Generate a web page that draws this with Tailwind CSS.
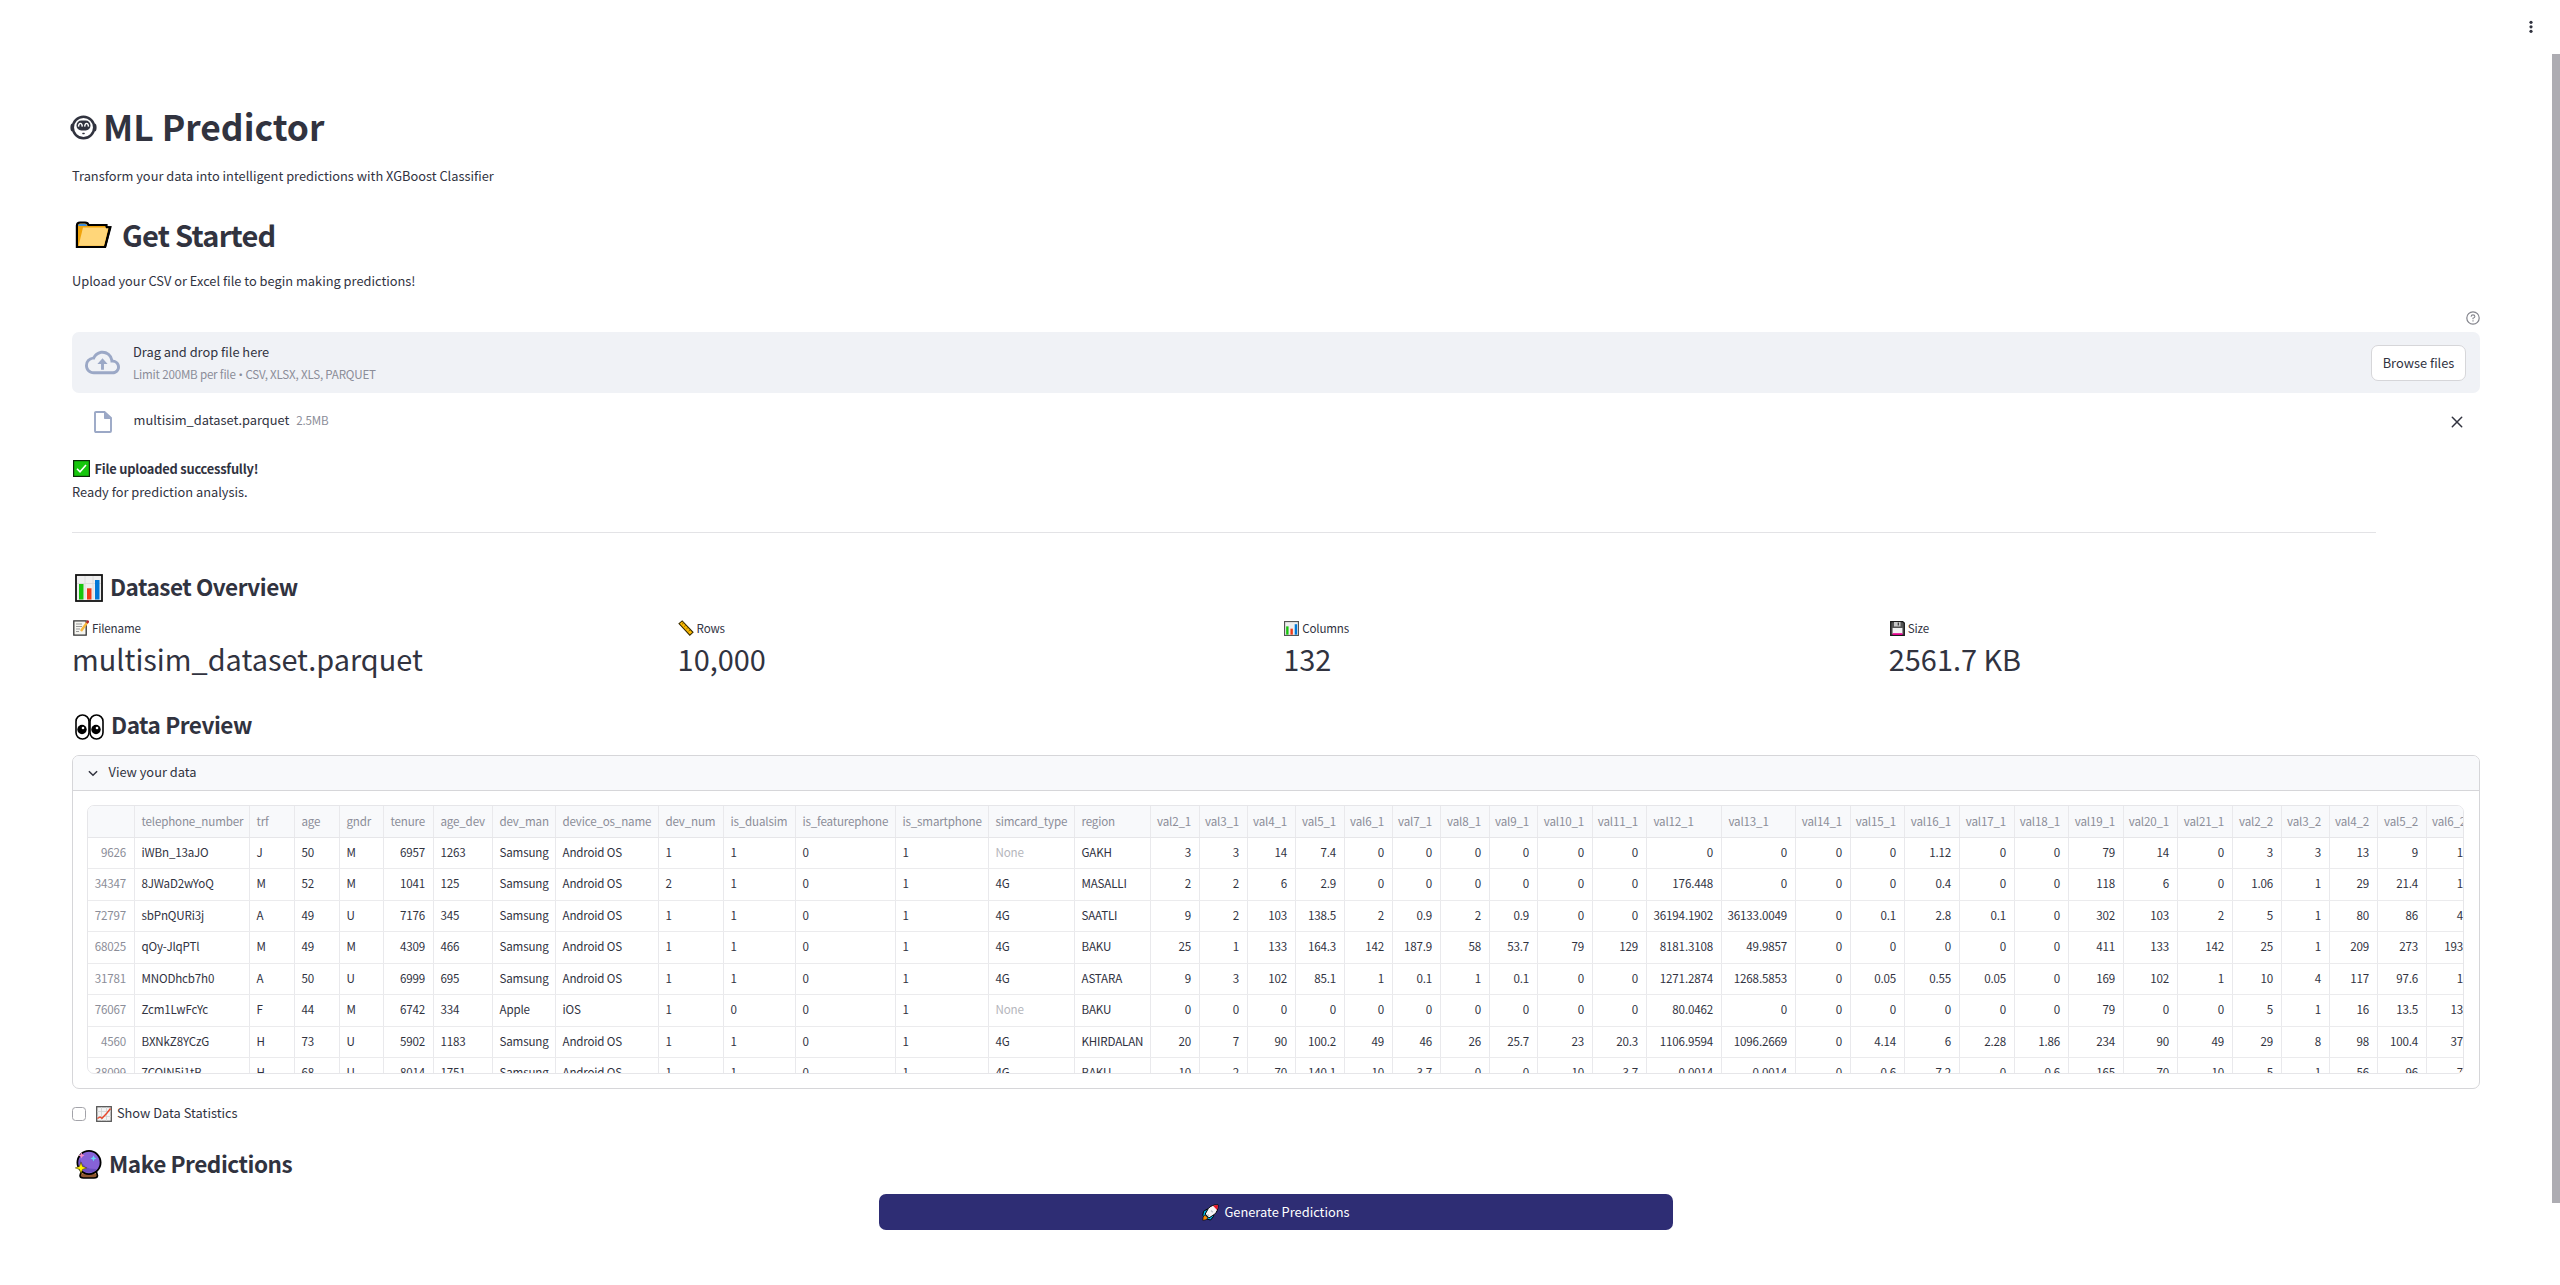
<!DOCTYPE html>
<html lang="en">
<head>
<meta charset="utf-8">
<title>ML Predictor</title>
<script src="https://cdn.jsdelivr.net/npm/@tailwindcss/browser@4"></script>
</head>
<body class="bg-white text-[#31333f] font-['Noto_Sans_CJK_SC',sans-serif] text-[12.83px] leading-[23px] w-[2560px] h-[1285px] overflow-hidden relative">
<!-- toolbar menu -->
<header class="h-[54px] flex justify-end pt-[20px] pr-[26px]">
  <svg class="w-[6px] h-[14px]" viewBox="0 0 6 14" fill="#31333f"><circle cx="3" cy="2.3" r="1.6"/><circle cx="3" cy="6.8" r="1.6"/><circle cx="3" cy="11.3" r="1.6"/></svg>
</header>
<div class="absolute right-0 top-[54px] w-2 h-[1149px] bg-[#adacb2]"></div>

<main class="pl-[72px] pr-[80px] pt-[48px] flex flex-col">
  <h1 class="h-12 leading-[48px] text-[35.4px] font-bold flex items-center">
    <svg class="w-[27px] h-[25px] -ml-[2px] mr-[6px] mt-[2px]" viewBox="0 0 27 25"><path d="M2.5 8.500Q.4 8.500.4 12.5t2.100 4zM24.500 8.500q2.100 0 2.100 4t-2.100 4z" fill="#31333f"/><circle cx="13.500" cy="12.500" r="10.700" fill="#fff" stroke="#31333f" stroke-width="2.500"/><rect x="6.500" y="5.500" width="14" height="10" rx="4.800" fill="#31333f"/><path d="M8.500 11.600q.2-3.200 1.900-3.200t1.900 3.200M14.700 11.600q.2-3.200 1.900-3.200t1.900 3.200" fill="none" stroke="#fff" stroke-width="1.400"/><rect x="12.200" y="17.800" width="2.600" height="1.500" rx=".7" fill="#31333f"/></svg>
    <span>ML Predictor</span>
  </h1>
  <p class="mt-[14px]">Transform your data into intelligent predictions with XGBoost Classifier</p>
  <h2 class="mt-7 h-[39px] leading-[39px] text-[29px] tracking-[-0.75px] font-semibold flex items-center">
    <svg class="w-[37px] h-[28px] ml-[3px] mr-[10px]" viewBox="0 0 37 28"><path d="M1.900 4.500Q2 1.500 5 1.500h5q3 0 3.500 2.500h18v2.300h3.400L30 26H1.900z" fill="#f0a30a" stroke="#000" stroke-width="2.200"/><path d="M3.200 5Q3.400 2.700 5.500 2.700h4.200q2 0 2.500 2.300z" fill="#3d8fdd"/><path d="M8 6.500h25.500L29 24.800H3.600z" fill="#ffd679"/><path d="M31 6.300h4.500L30.200 26H2" fill="none" stroke="#000" stroke-width="2"/></svg>
    <span>Get Started</span>
  </h2>
  <p class="mt-[15px]">Upload your CSV or Excel file to begin making predictions!</p>

  <div class="mt-[19px] h-[14px] flex justify-end">
    <svg class="size-[14px]" viewBox="0 0 14 14" fill="none" stroke="#83848c"><circle cx="7" cy="7" r="6.200" stroke-width="1.200"/><path d="M5.100 5.700q.1-1.800 1.900-1.800t1.900 1.600Q8.900 6.700 7 7.200v1.100M7 9.300v1.100" stroke-width="1.100"/></svg>
  </div>

  <section class="mt-[7px] h-[61px] rounded-[7px] bg-[#f0f2f6] flex items-center pl-[13px] pr-[14px]">
    <svg class="w-[35px] h-[35px]" viewBox="0 0 24 24" fill="#9ba8c6"><path d="M19.350 10.040A7.490 7.490 0 0 0 12 4C9.110 4 6.600 5.640 5.350 8.040A5.994 5.994 0 0 0 0 14c0 3.310 2.690 6 6 6h13c2.760 0 5-2.240 5-5 0-2.640-2.050-4.780-4.650-4.960zM19 18H6c-2.210 0-4-1.790-4-4s1.790-4 4-4h.71C7.370 7.690 9.480 6 12 6c3.040 0 5.500 2.460 5.500 5.500v.5H19c1.660 0 3 1.340 3 3s-1.340 3-3 3zM8.500 13H11v4h2v-4h2.500L12 9z"/></svg>
    <div class="ml-[13px] flex flex-col grow">
      <span>Drag and drop file here</span>
      <span class="text-[11.6px] tracking-[-0.2px] leading-[22px] text-[#8b8d98]">Limit 200MB per file<span class="font-['Open_Sans']"> • </span>CSV, XLSX, XLS, PARQUET</span>
    </div>
    <button class="w-[95px] h-9 rounded-[7px] border border-[#d6d6d9] bg-white">Browse files</button>
  </section>

  <div class="mt-[7px] h-[44px] flex items-center pl-[22px] pr-[17px]">
    <svg class="w-[18px] h-[22px]" viewBox="0 0 18 22"><path d="M1 2q0-1 1-1h8.500L17 7v13q0 1-1 1H2q-1 0-1-1z" fill="none" stroke="#9ba8c6" stroke-width="1.900"/><path d="M10 1l7 7h-6.200q-.8 0-.8-.8z" fill="#9ba8c6"/></svg>
    <span class="ml-[21.5px] -mt-[5px]">multisim_dataset.parquet</span>
    <span class="ml-[7px] grow text-[11.6px] tracking-[-0.2px] text-[#8b8d98] -mt-[3px]">2.5MB</span>
    <svg class="size-3" viewBox="0 0 12 12" stroke="#31333f" stroke-width="1.500" stroke-linecap="round"><path d="M1.300 1.300l9.400 9.400M10.700 1.300l-9.400 9.400"/></svg>
  </div>

  <p class="mt-[13px] flex items-center font-bold tracking-[-0.2px]">
    <svg class="size-[17px] ml-[1px] mr-[4.500px]" viewBox="0 0 17 17"><rect x=".6" y=".6" width="15.800" height="15.800" fill="#16c60c" stroke="#0a2a08" stroke-width="1.200"/><path d="M4 8.800l3 3 6-6.800" fill="none" stroke="#fff" stroke-width="1.600"/></svg>
    <span>File uploaded successfully!</span>
  </p>
  <p>Ready for prediction analysis.</p>
  <hr class="mt-[29px] w-[2304px] border-[#e3e3e6]">

  <h3 class="mt-[38px] h-[30px] leading-[30px] text-[22.56px] tracking-[-0.5px] font-semibold flex items-center">
    <svg class="size-[28px] ml-[3px] mr-[7px] mt-[3px]" viewBox="0 0 28 28"><rect x="1" y="1" width="26" height="26" fill="#efefef" stroke="#111" stroke-width="1.800"/><path d="M10 2v23M18 2v23M2 9.500h24" stroke="#dcdcdc"/><path d="M4 10h4.500v15.500H4z" fill="#16c60c"/><path d="M12 14.300h4.500v11.200H12z" fill="#f03a17"/><path d="M20 6h4.500v19.500H20z" fill="#0078d7"/></svg>
    <span>Dataset Overview</span>
  </h3>
  <div class="mt-[17px] grid grid-cols-4 gap-[14.4px]">
    <div>
      <div class="h-5 leading-5 text-[11.6px] tracking-[-0.17px] flex items-center">
        <svg class="size-4 ml-px mr-[3px]" viewBox="0 0 16 16"><path d="M.8.8h12.400v14.400H.8z" fill="#f5f5f0" stroke="#333" stroke-width="1.300"/><path d="M3 4h6M3 6.500h6M3 9h4M3 11.500h3" stroke="#999"/><path d="M14.500 2L8 11" stroke="#f7b73c" stroke-width="2.400"/><path d="M15.600.8l-1.800 2.300" stroke="#b3262c" stroke-width="2.400"/></svg>
        <span>Filename</span>
      </div>
      <div class="mt-px h-[39px] leading-[39px] text-[28.9px]">multisim_dataset.parquet</div>
    </div>
    <div>
      <div class="h-5 leading-5 text-[11.6px] tracking-[-0.17px] flex items-center">
        <svg class="size-4 mr-[3px]" viewBox="0 0 16 16"><path d="M1 3.600L4.200.9 15 12.300l-3.200 2.900z" fill="#fcb900" stroke="#3a2c00" stroke-width="1.100"/><path d="M5.500 3l-1.500 1.300M7.700 5.300L6.200 6.600M9.900 7.600L8.400 8.900M12.100 9.900l-1.500 1.300" stroke="#6b4f00" stroke-width=".8"/></svg>
        <span>Rows</span>
      </div>
      <div class="mt-px h-[39px] leading-[39px] text-[28.9px]">10,000</div>
    </div>
    <div>
      <div class="h-5 leading-5 text-[11.6px] tracking-[-0.17px] flex items-center">
        <svg class="size-[15px] ml-px mr-[3px]" viewBox="0 0 28 28"><rect x="1" y="1" width="26" height="26" fill="#efefef" stroke="#555" stroke-width="2.200"/><path d="M4 10h4.500v15.500H4z" fill="#16c60c"/><path d="M12 14.300h4.500v11.200H12z" fill="#f03a17"/><path d="M20 6h4.500v19.500H20z" fill="#0078d7"/></svg>
        <span>Columns</span>
      </div>
      <div class="mt-px h-[39px] leading-[39px] text-[28.9px]">132</div>
    </div>
    <div>
      <div class="h-5 leading-5 text-[11.6px] tracking-[-0.17px] flex items-center">
        <svg class="size-[15px] ml-px mr-[3px]" viewBox="0 0 15 15"><path d="M.7.7h12L14.300 2v12.300H.7z" fill="#555" stroke="#1a1a1a" stroke-width="1.300"/><path d="M4 1h6.500v4.500H4z" fill="#c8c8c8"/><path d="M8.300 1.500v3" stroke="#333" stroke-width="1.200"/><path d="M2.600 7h9.800v6H2.600z" fill="#f2f2f2"/><path d="M2.600 12.200h9.800v1.800H2.600z" fill="#e3008c"/></svg>
        <span>Size</span>
      </div>
      <div class="mt-px h-[39px] leading-[39px] text-[28.9px]">2561.7 KB</div>
    </div>
  </div>

  <h3 class="mt-[31px] h-[30px] leading-[30px] text-[22.56px] tracking-[-0.45px] font-semibold flex items-center">
    <svg class="w-[29px] h-[26px] ml-[3px] mr-[7px] mt-[5px]" viewBox="0 0 29 26" fill="#fff" stroke="#000" stroke-width="1.600"><rect x="1" y="1" width="13" height="24" rx="6.400"/><rect x="15" y="1" width="13" height="24" rx="6.400"/><g fill="#000" stroke="none"><circle cx="7" cy="15.500" r="4.700"/><circle cx="21" cy="15.500" r="4.700"/></g><g stroke="none"><circle cx="8" cy="14" r="1.300"/><circle cx="22" cy="14" r="1.300"/></g></svg>
    <span>Data Preview</span>
  </h3>

  <section class="mt-4 h-[334px] rounded-[7px] border border-[#d6d6d9] overflow-hidden flex flex-col">
    <div class="h-[35px] shrink-0 border-b border-[#d6d6d9] bg-[#f8f9fb] flex items-center pl-[15px]">
      <svg class="w-[10px] h-[7px]" viewBox="0 0 10 7" fill="none" stroke="#31333f" stroke-width="1.500"><path d="M.9 1.200L5 5.300l4.100-4.100"/></svg>
      <span class="ml-[10.500px] -mt-[2px] leading-[32px]">View your data</span>
    </div>
    <div class="ml-[14px] mr-[15px] mt-[14px] h-[269px] rounded-[7px] border border-[#e6e6e9] overflow-hidden">
      <div id="grid" class="w-[2500px] text-[11.6px] tracking-[-0.17px]"></div>
    </div>
  </section>

  <label class="mt-3 h-[23px] flex items-center">
    <span class="size-[14.400px] mt-[3px] rounded-[3.500px] border border-[#a3a3a9]"></span>
    <svg class="size-4 ml-[9.500px] mr-[5px] mt-[2px]" viewBox="0 0 16 16"><rect x=".7" y=".7" width="14.600" height="14.600" fill="#f3f3f3" stroke="#555" stroke-width="1.300"/><path d="M5.500 1v14M10.500 1v14M1 5.500h14M1 10.500h14" stroke="#d0d0d0" stroke-width=".8"/><path d="M1.500 12.500l2.500-1.500 2 1.300 5-5.300 3.500-4.500" fill="none" stroke="#e8472b" stroke-width="1.400"/></svg>
    <span>Show Data Statistics</span>
  </label>

  <h3 class="mt-6 h-[30px] leading-[30px] text-[22.56px] tracking-[-0.45px] font-semibold flex items-center">
    <svg class="w-[28px] h-[29px] ml-[2.500px] mr-[6.500px] mt-[3px]" viewBox="0 0 28 29"><path d="M6 22h15.500l1 3.500q0 2.500-3.500 2.500H8.500Q5 28 5 25.500z" fill="#8e562e" stroke="#000" stroke-width="1.600"/><path d="M7 23.300h14" stroke="#c98a4b" stroke-width="1.600"/><circle cx="14" cy="12.500" r="11.600" fill="#8662d8" stroke="#000" stroke-width="1.800"/><path d="M4.800 9q-2 8 5 13 8 2 12-3Q9 20 4.800 9z" fill="#6b4fc0"/><path d="M6.500 2.500l.9 2.100 2.100.9-2.100.9-.9 2.100-.9-2.100-2.100-.9 2.100-.9z" fill="#f78fc5"/><path d="M18.500 5.300l.9 2.200 2.200.9-2.200.9-.9 2.200-.9-2.200-2.200-.9 2.200-.9z" fill="#61d6f5"/><path d="M6 12.200l1.500 4.200 4.200 1.500-4.200 1.500L6 23.600l-1.500-4.200L.3 17.900l4.200-1.500z" fill="#fff100" stroke="#3a2f00" stroke-width=".5"/></svg>
    <span>Make Predictions</span>
  </h3>
  <button class="mt-4 ml-[807px] w-[794px] h-9 rounded-[7px] bg-[#2e2d74] text-white flex items-center justify-center">
    <svg class="size-[17px] mr-[5px]" viewBox="0 0 17 17"><path d="M5.500 5L1.500 7.300.8 11.500l4 3.500 3.700 1 3-3.500.5-3.500z" fill="#00b7e8" stroke="#000" stroke-width="1"/><path d="M.8 16.300q-.2-3.800 2-5.300l3.200 3q-1.500 2.300-5.200 2.300z" fill="#ff8c00" stroke="#000" stroke-width=".6"/><path d="M16 .8Q9.500.6 6.300 4.500L3.200 10l3.800 3.900 5.200-3.300Q16.500 7 16 .8z" fill="#f6f6f6" stroke="#000" stroke-width="1"/><path d="M15.900.9Q13.300.8 11 1.700l4 4.200q1-2.300.9-5z" fill="#e81224"/><path d="M9 6.500l1.800 1.800M5.500 10.500l1.600 1.600" stroke="#b9c2c9" stroke-width="1.400"/></svg>
    <span class="-mt-[2px]">Generate Predictions</span>
  </button>
</main>

<script>
// Left edge of every column, in page pixels, plus the end of the last one
const edges = [87,134,249,294,339,383,433,492,555,658,723,795,895,988,1074,1150,1199,1247,1295,1344,1392,1440,1489,1537,1592,1646,1721,1795,1850,1904,1959,2014,2068,2123,2177,2232,2281,2329,2377,2426,2474];
const head = ['', ...'telephone_number trf age gndr tenure age_dev dev_man device_os_name dev_num is_dualsim is_featurephone is_smartphone simcard_type region val2_1 val3_1 val4_1 val5_1 val6_1 val7_1 val8_1 val9_1 val10_1 val11_1 val12_1 val13_1 val14_1 val15_1 val16_1 val17_1 val18_1 val19_1 val20_1 val21_1 val2_2 val3_2 val4_2 val5_2 val6_2'.split(' ')];
const rows = [
 '9626|iWBn_13aJO|J|50|M|6957|1263|Samsung|Android OS|1|1|0|1|None|GAKH|3|3|14|7.4|0|0|0|0|0|0|0|0|0|0|1.12|0|0|79|14|0|3|3|13|9|1',
 '34347|8JWaD2wYoQ|M|52|M|1041|125|Samsung|Android OS|2|1|0|1|4G|MASALLI|2|2|6|2.9|0|0|0|0|0|0|176.448|0|0|0|0.4|0|0|118|6|0|1.06|1|29|21.4|1',
 '72797|sbPnQURi3j|A|49|U|7176|345|Samsung|Android OS|1|1|0|1|4G|SAATLI|9|2|103|138.5|2|0.9|2|0.9|0|0|36194.1902|36133.0049|0|0.1|2.8|0.1|0|302|103|2|5|1|80|86|4',
 '68025|qOy-JlqPTl|M|49|M|4309|466|Samsung|Android OS|1|1|0|1|4G|BAKU|25|1|133|164.3|142|187.9|58|53.7|79|129|8181.3108|49.9857|0|0|0|0|0|411|133|142|25|1|209|273|193',
 '31781|MNODhcb7h0|A|50|U|6999|695|Samsung|Android OS|1|1|0|1|4G|ASTARA|9|3|102|85.1|1|0.1|1|0.1|0|0|1271.2874|1268.5853|0|0.05|0.55|0.05|0|169|102|1|10|4|117|97.6|1',
 '76067|Zcm1LwFcYc|F|44|M|6742|334|Apple|iOS|1|0|0|1|None|BAKU|0|0|0|0|0|0|0|0|0|0|80.0462|0|0|0|0|0|0|79|0|0|5|1|16|13.5|13',
 '4560|BXNkZ8YCzG|H|73|U|5902|1183|Samsung|Android OS|1|1|0|1|4G|KHIRDALAN|20|7|90|100.2|49|46|26|25.7|23|20.3|1106.9594|1096.2669|0|4.14|6|2.28|1.86|234|90|49|29|8|98|100.4|37',
 '38099|7COlN5i1tB|H|68|U|8014|1751|Samsung|Android OS|1|1|0|1|4G|BAKU|10|2|70|140.1|10|3.7|0|0|10|3.7|0.0014|0.0014|0|0.6|7.2|0|0.6|165|70|10|5|1|56|96|7'
];
const grid = document.getElementById('grid');
function addRow(cells, isHead) {
  const row = document.createElement('div');
  row.className = isHead
    ? 'flex h-[32px] leading-[30px] bg-[#f8f9fb] border-b border-[#e6e6e9] text-[#8b8d98]'
    : 'flex h-[31.45px] leading-[29px] border-b border-[#ebebed]';
  cells.forEach((text, i) => {
    const numeric = i === 0 || i === 5 || i > 14;
    const leftHead = isHead && (i === 25 || i === 26);
    const cell = document.createElement('div');
    let cls = 'shrink-0 whitespace-nowrap border-r border-[#e9e9ec] pl-[6.500px] ';
    // values of the last column run slightly past the frame
    cls += i === 39 && !isHead ? 'pr-[11px] ' : 'pr-[8px] ';
    cls += numeric && !leftHead ? 'flex justify-end ' : 'flex justify-start ';
    if (i === 0) cls += 'text-[#8b8d98]';
    else if (text === 'None') cls += 'text-[#b5b6bc]';
    cell.className = cls;
    cell.style.width = (edges[i + 1] - edges[i]) + 'px';
    cell.textContent = text;
    row.appendChild(cell);
  });
  grid.appendChild(row);
}
addRow(head, true);
rows.forEach(r => addRow(r.split('|'), false));
</script>
</body>
</html>
